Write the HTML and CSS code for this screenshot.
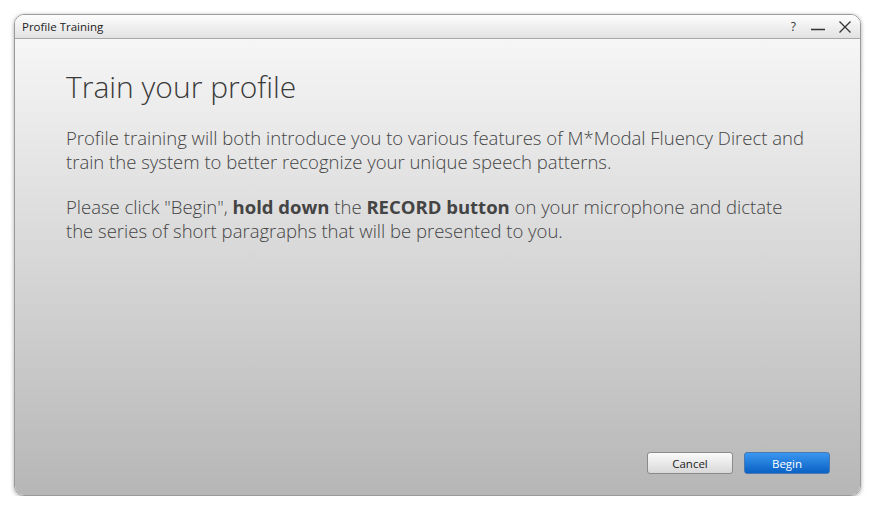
FILE: index.html
```html
<!DOCTYPE html>
<html lang="en">
<head>
    <meta charset="UTF-8">
    <title>Profile Training</title>
    <link rel="stylesheet" href="styles.css">
</head>
<body>
    <div class="window">
        <!-- Title bar -->
        <div class="titlebar">
            <span class="title">Profile Training</span>
            <div class="controls">
                <span class="help">?</span>
                <svg width="16" height="14" viewBox="0 0 16 14"><line x1="1" y1="9.5" x2="15" y2="9.5" stroke="#333" stroke-width="1.3"/></svg>
                <svg width="14" height="14" viewBox="0 0 14 14"><path d="M1.5 1.5 L12.5 12.5 M12.5 1.5 L1.5 12.5" stroke="#333" stroke-width="1.3" fill="none"/></svg>
            </div>
        </div>

        <!-- Content -->
        <div class="content">
            <h1>Train your profile</h1>
            <p>Profile training will both introduce you to various features of M*Modal Fluency Direct and train the system to better recognize your unique speech patterns.</p>
            <p>Please click "Begin", <b>hold down</b> the <b>RECORD button</b> on your microphone and dictate the series of short paragraphs that will be presented to you.</p>

            <div class="buttons">
                <button class="btn">Cancel</button>
                <button class="btn primary">Begin</button>
            </div>
        </div>
    </div>
</body>
</html>
```

FILE: styles.css
```css
body {
    margin: 0;
    background: #ffffff;
    font-family: "Open Sans", "Noto Sans", sans-serif;
}
.window {
    margin: 14px 0 0 14px;
    width: 845px;
    height: 480px;
    border: 1px solid #9a9a9a;
    border-radius: 10px;
    box-shadow: 0 1px 4px rgba(0, 0, 0, 0.35);
    display: flex;
    flex-direction: column;
    overflow: hidden;
}
.titlebar {
    height: 23px;
    background: linear-gradient(#fdfdfd, #e2e2e2);
    border-bottom: 1px solid #a8a8a8;
    display: flex;
    align-items: center;
    justify-content: space-between;
    padding: 0 8px 0 7px;
}
.title {
    font-size: 11.5px;
    color: #222;
}
.controls {
    display: flex;
    align-items: center;
    gap: 12px;
}
.help {
    font-size: 12px;
    color: #333;
    margin-right: 2px;
}
.content {
    flex: 1;
    background: linear-gradient(#f6f6f6, #b6b6b6);
    padding: 28px 50px 0 51px;
    display: flex;
    flex-direction: column;
    color: #444;
}
h1 {
    margin: 0 0 19px 0;
    font-size: 30px;
    font-weight: 300;
    color: #3a3a3a;
    line-height: 40px;
}
p {
    margin: 0 0 21px 0;
    font-size: 18.5px;
    font-weight: 300;
    line-height: 24px;
    color: #444444;
}
p b {
    font-weight: 700;
}
.buttons {
    margin-top: auto;
    margin-bottom: 21px;
    display: flex;
    justify-content: flex-end;
    gap: 11px;
    margin-right: -20px;
}
.btn {
    width: 86px;
    height: 22px;
    font-family: "Open Sans", sans-serif;
    font-size: 11.5px;
    border: 1px solid #8a8a8a;
    border-radius: 3px;
    background: linear-gradient(#fafafa, #d8d8d8);
    color: #222;
    padding: 0;
}
.btn.primary {
    background: linear-gradient(#3a96f0, #0a62c4);
    border-color: #4a78b0;
    color: #fff;
}
```
